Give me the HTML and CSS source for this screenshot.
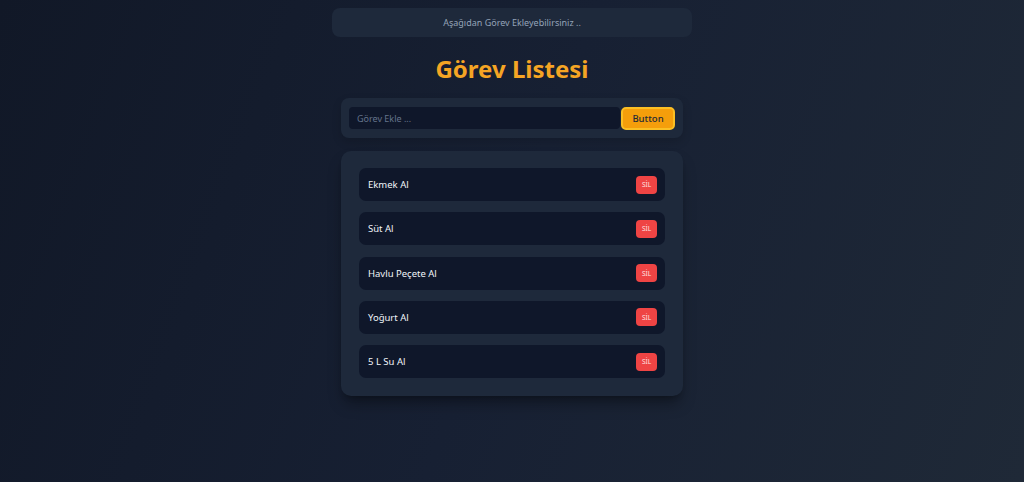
FILE: index.html
```html
<!DOCTYPE html>
<html lang="tr">
<head>
<meta charset="utf-8">
<title>Görev Listesi</title>
<link rel="stylesheet" href="styles.css">
</head>
<body>
<div class="page">
  <div class="notice">Aşağıdan Görev Ekleyebilirsiniz ..</div>
  <h1 class="title">Görev Listesi</h1>
  <form class="add-form">
    <input class="add-input" type="text" placeholder="Görev Ekle ...">
    <button class="add-btn" type="button">Button</button>
  </form>
  <ul class="task-list">
    <li class="task"><span class="task-text">Ekmek Al</span><button class="del-btn" type="button">SİL</button></li>
    <li class="task"><span class="task-text">Süt Al</span><button class="del-btn" type="button">SİL</button></li>
    <li class="task"><span class="task-text">Havlu Peçete Al</span><button class="del-btn" type="button">SİL</button></li>
    <li class="task"><span class="task-text">Yoğurt Al</span><button class="del-btn" type="button">SİL</button></li>
    <li class="task"><span class="task-text">5 L Su Al</span><button class="del-btn" type="button">SİL</button></li>
  </ul>
</div>
</body>
</html>
```
FILE: styles.css
```css
* { box-sizing: border-box; }
html, body { margin: 0; padding: 0; }
body {
  min-height: 100vh;
  background: linear-gradient(110deg, #111827 0%, #172033 50%, #1f2937 100%);
  font-family: "Noto Sans", "Open Sans", sans-serif;
  color: #e5e7eb;
}
.page {
  display: flex;
  flex-direction: column;
  align-items: center;
  padding-top: 8px;
}
.notice {
  width: 360px;
  height: 29px;
  border-radius: 8px;
  background: #1e293b;
  color: #94a3b8;
  font-size: 9px;
  display: flex;
  align-items: center;
  justify-content: center;
}
.title {
  margin: 16px 0 0;
  font-size: 24px;
  line-height: 32px;
  font-weight: 700;
  color: #f5a524;
}
.add-form {
  margin-top: 13px;
  width: 342px;
  height: 40px;
  padding: 0 8px;
  background: #1e293b;
  border-radius: 8px;
  display: flex;
  align-items: center;
  gap: 1px;
  box-shadow: 0 4px 10px rgba(0,0,0,0.15);
}
.add-input {
  flex: 1;
  height: 22px;
  border: none;
  outline: none;
  border-radius: 4px;
  background: #0f172a;
  padding: 0 8px;
  color: #e5e7eb;
  font-family: inherit;
  font-size: 9px;
}
.add-input::placeholder { color: #64748b; }
.add-btn {
  width: 54px;
  height: 23px;
  border: 2px solid #fbbf24;
  border-radius: 5px;
  background: #f59e0b;
  color: #1f2937;
  font-family: inherit;
  font-size: 9.5px;
  font-weight: 500;
  padding: 0;
}
.task-list {
  list-style: none;
  margin: 13px 0 0;
  width: 342px;
  padding: 17px 18px 18px;
  background: #1e293b;
  border-radius: 10px;
  display: flex;
  flex-direction: column;
  gap: 11.25px;
  box-shadow: 0 10px 15px -3px rgba(0,0,0,0.35), 0 4px 6px -4px rgba(0,0,0,0.3);
}
.task {
  height: 33px;
  background: #0f172a;
  border-radius: 7px;
  padding: 0 8px 0 9px;
  display: flex;
  align-items: center;
  justify-content: space-between;
}
.task-text {
  font-size: 9.5px;
  color: #f1f5f9;
}
.del-btn {
  width: 21px;
  height: 18px;
  border: none;
  border-radius: 4px;
  background: #ef4444;
  color: #fee2e2;
  font-family: inherit;
  font-size: 6.5px;
  padding: 0;
}
```
